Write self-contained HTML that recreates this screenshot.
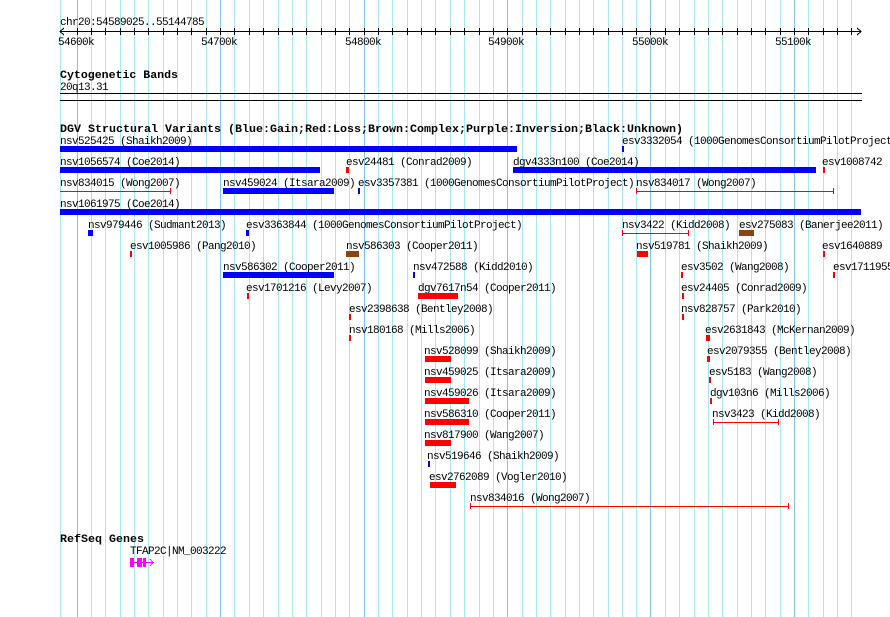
<!DOCTYPE html>
<html><head><meta charset="utf-8"><style>
html,body{margin:0;padding:0;background:#fff;}
svg{display:block;}
text{font-family:"Liberation Mono",monospace;font-size:11px;letter-spacing:-0.6px;fill:#000;}
.b{font-weight:bold;font-size:11px;letter-spacing:0;}
</style></head><body>
<svg width="890" height="617" xmlns="http://www.w3.org/2000/svg">
<g shape-rendering="crispEdges">
<line x1="60.5" y1="0" x2="60.5" y2="617" stroke="#a8e8f0"/>
<line x1="77.5" y1="0" x2="77.5" y2="617" stroke="#80c4ec"/>
<line x1="91.5" y1="0" x2="91.5" y2="617" stroke="#a8e8f0"/>
<line x1="105.5" y1="0" x2="105.5" y2="617" stroke="#a8e8f0"/>
<line x1="120.5" y1="0" x2="120.5" y2="617" stroke="#a8e8f0"/>
<line x1="134.5" y1="0" x2="134.5" y2="617" stroke="#a8e8f0"/>
<line x1="148.5" y1="0" x2="148.5" y2="617" stroke="#a8e8f0"/>
<line x1="163.5" y1="0" x2="163.5" y2="617" stroke="#a8e8f0"/>
<line x1="177.5" y1="0" x2="177.5" y2="617" stroke="#a8e8f0"/>
<line x1="191.5" y1="0" x2="191.5" y2="617" stroke="#a8e8f0"/>
<line x1="206.5" y1="0" x2="206.5" y2="617" stroke="#a8e8f0"/>
<line x1="220.5" y1="0" x2="220.5" y2="617" stroke="#80c4ec"/>
<line x1="234.5" y1="0" x2="234.5" y2="617" stroke="#a8e8f0"/>
<line x1="249.5" y1="0" x2="249.5" y2="617" stroke="#a8e8f0"/>
<line x1="263.5" y1="0" x2="263.5" y2="617" stroke="#a8e8f0"/>
<line x1="278.5" y1="0" x2="278.5" y2="617" stroke="#a8e8f0"/>
<line x1="292.5" y1="0" x2="292.5" y2="617" stroke="#a8e8f0"/>
<line x1="306.5" y1="0" x2="306.5" y2="617" stroke="#a8e8f0"/>
<line x1="321.5" y1="0" x2="321.5" y2="617" stroke="#a8e8f0"/>
<line x1="335.5" y1="0" x2="335.5" y2="617" stroke="#a8e8f0"/>
<line x1="349.5" y1="0" x2="349.5" y2="617" stroke="#a8e8f0"/>
<line x1="364.5" y1="0" x2="364.5" y2="617" stroke="#80c4ec"/>
<line x1="378.5" y1="0" x2="378.5" y2="617" stroke="#a8e8f0"/>
<line x1="392.5" y1="0" x2="392.5" y2="617" stroke="#a8e8f0"/>
<line x1="407.5" y1="0" x2="407.5" y2="617" stroke="#a8e8f0"/>
<line x1="421.5" y1="0" x2="421.5" y2="617" stroke="#a8e8f0"/>
<line x1="435.5" y1="0" x2="435.5" y2="617" stroke="#a8e8f0"/>
<line x1="450.5" y1="0" x2="450.5" y2="617" stroke="#a8e8f0"/>
<line x1="464.5" y1="0" x2="464.5" y2="617" stroke="#a8e8f0"/>
<line x1="479.5" y1="0" x2="479.5" y2="617" stroke="#a8e8f0"/>
<line x1="493.5" y1="0" x2="493.5" y2="617" stroke="#a8e8f0"/>
<line x1="507.5" y1="0" x2="507.5" y2="617" stroke="#80c4ec"/>
<line x1="522.5" y1="0" x2="522.5" y2="617" stroke="#a8e8f0"/>
<line x1="536.5" y1="0" x2="536.5" y2="617" stroke="#a8e8f0"/>
<line x1="550.5" y1="0" x2="550.5" y2="617" stroke="#a8e8f0"/>
<line x1="565.5" y1="0" x2="565.5" y2="617" stroke="#a8e8f0"/>
<line x1="579.5" y1="0" x2="579.5" y2="617" stroke="#a8e8f0"/>
<line x1="593.5" y1="0" x2="593.5" y2="617" stroke="#a8e8f0"/>
<line x1="608.5" y1="0" x2="608.5" y2="617" stroke="#a8e8f0"/>
<line x1="622.5" y1="0" x2="622.5" y2="617" stroke="#a8e8f0"/>
<line x1="636.5" y1="0" x2="636.5" y2="617" stroke="#a8e8f0"/>
<line x1="650.5" y1="0" x2="650.5" y2="617" stroke="#80c4ec"/>
<line x1="665.5" y1="0" x2="665.5" y2="617" stroke="#a8e8f0"/>
<line x1="679.5" y1="0" x2="679.5" y2="617" stroke="#a8e8f0"/>
<line x1="694.5" y1="0" x2="694.5" y2="617" stroke="#a8e8f0"/>
<line x1="708.5" y1="0" x2="708.5" y2="617" stroke="#a8e8f0"/>
<line x1="722.5" y1="0" x2="722.5" y2="617" stroke="#a8e8f0"/>
<line x1="737.5" y1="0" x2="737.5" y2="617" stroke="#a8e8f0"/>
<line x1="751.5" y1="0" x2="751.5" y2="617" stroke="#a8e8f0"/>
<line x1="765.5" y1="0" x2="765.5" y2="617" stroke="#a8e8f0"/>
<line x1="780.5" y1="0" x2="780.5" y2="617" stroke="#a8e8f0"/>
<line x1="794.5" y1="0" x2="794.5" y2="617" stroke="#80c4ec"/>
<line x1="808.5" y1="0" x2="808.5" y2="617" stroke="#a8e8f0"/>
<line x1="823.5" y1="0" x2="823.5" y2="617" stroke="#a8e8f0"/>
<line x1="837.5" y1="0" x2="837.5" y2="617" stroke="#a8e8f0"/>
<line x1="851.5" y1="0" x2="851.5" y2="617" stroke="#a8e8f0"/>
</g>

<text x="60" y="25">chr20:54589025..55144785</text>
<g stroke="#000" shape-rendering="crispEdges">
<line x1="60" y1="31.5" x2="861" y2="31.5"/>
<path d="M64 28 L60 31.5 L64 35 M857 28 L861 31.5 L857 35" fill="none"/>
<line x1="77.5" y1="28" x2="77.5" y2="35"/><line x1="91.5" y1="28" x2="91.5" y2="35"/><line x1="105.5" y1="28" x2="105.5" y2="35"/><line x1="120.5" y1="28" x2="120.5" y2="35"/><line x1="134.5" y1="28" x2="134.5" y2="35"/><line x1="148.5" y1="28" x2="148.5" y2="35"/><line x1="163.5" y1="28" x2="163.5" y2="35"/><line x1="177.5" y1="28" x2="177.5" y2="35"/><line x1="191.5" y1="28" x2="191.5" y2="35"/><line x1="206.5" y1="28" x2="206.5" y2="35"/>
<line x1="220.5" y1="28" x2="220.5" y2="35"/><line x1="234.5" y1="28" x2="234.5" y2="35"/><line x1="249.5" y1="28" x2="249.5" y2="35"/><line x1="263.5" y1="28" x2="263.5" y2="35"/><line x1="278.5" y1="28" x2="278.5" y2="35"/><line x1="292.5" y1="28" x2="292.5" y2="35"/><line x1="306.5" y1="28" x2="306.5" y2="35"/><line x1="321.5" y1="28" x2="321.5" y2="35"/><line x1="335.5" y1="28" x2="335.5" y2="35"/><line x1="349.5" y1="28" x2="349.5" y2="35"/>
<line x1="364.5" y1="28" x2="364.5" y2="35"/><line x1="378.5" y1="28" x2="378.5" y2="35"/><line x1="392.5" y1="28" x2="392.5" y2="35"/><line x1="407.5" y1="28" x2="407.5" y2="35"/><line x1="421.5" y1="28" x2="421.5" y2="35"/><line x1="435.5" y1="28" x2="435.5" y2="35"/><line x1="450.5" y1="28" x2="450.5" y2="35"/><line x1="464.5" y1="28" x2="464.5" y2="35"/><line x1="479.5" y1="28" x2="479.5" y2="35"/><line x1="493.5" y1="28" x2="493.5" y2="35"/>
<line x1="507.5" y1="28" x2="507.5" y2="35"/><line x1="522.5" y1="28" x2="522.5" y2="35"/><line x1="536.5" y1="28" x2="536.5" y2="35"/><line x1="550.5" y1="28" x2="550.5" y2="35"/><line x1="565.5" y1="28" x2="565.5" y2="35"/><line x1="579.5" y1="28" x2="579.5" y2="35"/><line x1="593.5" y1="28" x2="593.5" y2="35"/><line x1="608.5" y1="28" x2="608.5" y2="35"/><line x1="622.5" y1="28" x2="622.5" y2="35"/><line x1="636.5" y1="28" x2="636.5" y2="35"/>
<line x1="650.5" y1="28" x2="650.5" y2="35"/><line x1="665.5" y1="28" x2="665.5" y2="35"/><line x1="679.5" y1="28" x2="679.5" y2="35"/><line x1="694.5" y1="28" x2="694.5" y2="35"/><line x1="708.5" y1="28" x2="708.5" y2="35"/><line x1="722.5" y1="28" x2="722.5" y2="35"/><line x1="737.5" y1="28" x2="737.5" y2="35"/><line x1="751.5" y1="28" x2="751.5" y2="35"/><line x1="765.5" y1="28" x2="765.5" y2="35"/><line x1="780.5" y1="28" x2="780.5" y2="35"/>
<line x1="794.5" y1="28" x2="794.5" y2="35"/><line x1="808.5" y1="28" x2="808.5" y2="35"/><line x1="823.5" y1="28" x2="823.5" y2="35"/><line x1="837.5" y1="28" x2="837.5" y2="35"/><line x1="851.5" y1="28" x2="851.5" y2="35"/>
<line x1="60" y1="93.5" x2="862" y2="93.5"/>
<line x1="60" y1="100.5" x2="862" y2="100.5"/>
</g>
<text x="58" y="45">54600k</text>
<text x="201" y="45">54700k</text>
<text x="345" y="45">54800k</text>
<text x="488" y="45">54900k</text>
<text x="632" y="45">55000k</text>
<text x="775" y="45">55100k</text>

<text class="b" x="60" y="78" textLength="118" lengthAdjust="spacingAndGlyphs">Cytogenetic Bands</text>
<text x="60" y="90">20q13.31</text>

<text class="b" x="60" y="132" textLength="623" lengthAdjust="spacingAndGlyphs">DGV Structural Variants (Blue:Gain;Red:Loss;Brown:Complex;Purple:Inversion;Black:Unknown)</text>

<text x="60" y="144">nsv525425 (Shaikh2009)</text>
<text x="622" y="144">esv3332054 (1000GenomesConsortiumPilotProject</text>
<text x="60" y="165">nsv1056574 (Coe2014)</text>
<text x="346" y="165">esv24481 (Conrad2009)</text>
<text x="513" y="165">dgv4333n100 (Coe2014)</text>
<text x="822" y="165">esv1008742</text>
<text x="60" y="186">nsv834015 (Wong2007)</text>
<text x="223" y="186">nsv459024 (Itsara2009)</text>
<text x="358" y="186">esv3357381 (1000GenomesConsortiumPilotProject)</text>
<text x="636" y="186">nsv834017 (Wong2007)</text>
<text x="60" y="207">nsv1061975 (Coe2014)</text>
<text x="88" y="228">nsv979446 (Sudmant2013)</text>
<text x="246" y="228">esv3363844 (1000GenomesConsortiumPilotProject)</text>
<text x="622" y="228">nsv3422 (Kidd2008)</text>
<text x="739" y="228">esv275083 (Banerjee2011)</text>
<text x="130" y="249">esv1005986 (Pang2010)</text>
<text x="346" y="249">nsv586303 (Cooper2011)</text>
<text x="636" y="249">nsv519781 (Shaikh2009)</text>
<text x="822" y="249">esv1640889</text>
<text x="223" y="270">nsv586302 (Cooper2011)</text>
<text x="413" y="270">nsv472588 (Kidd2010)</text>
<text x="681" y="270">esv3502 (Wang2008)</text>
<text x="833" y="270">esv1711955</text>
<text x="246" y="291">esv1701216 (Levy2007)</text>
<text x="418" y="291">dgv7617n54 (Cooper2011)</text>
<text x="681" y="291">esv24405 (Conrad2009)</text>
<text x="349" y="312">esv2398638 (Bentley2008)</text>
<text x="681" y="312">nsv828757 (Park2010)</text>
<text x="349" y="333">nsv180168 (Mills2006)</text>
<text x="705" y="333">esv2631843 (McKernan2009)</text>
<text x="424" y="354">nsv528099 (Shaikh2009)</text>
<text x="707" y="354">esv2079355 (Bentley2008)</text>
<text x="424" y="375">nsv459025 (Itsara2009)</text>
<text x="709" y="375">esv5183 (Wang2008)</text>
<text x="424" y="396">nsv459026 (Itsara2009)</text>
<text x="710" y="396">dgv103n6 (Mills2006)</text>
<text x="424" y="417">nsv586310 (Cooper2011)</text>
<text x="712" y="417">nsv3423 (Kidd2008)</text>
<text x="424" y="438">nsv817900 (Wang2007)</text>
<text x="427" y="459">nsv519646 (Shaikh2009)</text>
<text x="429" y="480">esv2762089 (Vogler2010)</text>
<text x="470" y="501">nsv834016 (Wong2007)</text>

<g shape-rendering="crispEdges">
<rect x="60" y="146" width="457" height="6" fill="#0000ff"/>
<rect x="622" y="146" width="2" height="6" fill="#0000ff"/>
<rect x="60" y="167" width="260" height="6" fill="#0000ff"/>
<rect x="346" y="167" width="3" height="6" fill="#ff0000"/>
<rect x="513" y="167" width="303" height="6" fill="#0000ff"/>
<rect x="823" y="167" width="2" height="6" fill="#ff0000"/>
<rect x="223" y="188" width="111" height="6" fill="#0000ff"/>
<rect x="358" y="188" width="2" height="6" fill="#0000ff"/>
<rect x="60" y="209" width="801" height="6" fill="#0000ff"/>
<rect x="88" y="230" width="5" height="6" fill="#0000ff"/>
<rect x="246" y="230" width="3" height="6" fill="#0000ff"/>
<rect x="739" y="230" width="15" height="6" fill="#8b4513"/>
<rect x="130" y="251" width="2" height="6" fill="#ff0000"/>
<rect x="346" y="251" width="13" height="6" fill="#8b4513"/>
<rect x="637" y="251" width="11" height="6" fill="#ff0000"/>
<rect x="823" y="251" width="2" height="6" fill="#ff0000"/>
<rect x="223" y="272" width="111" height="6" fill="#0000ff"/>
<rect x="413" y="272" width="2" height="6" fill="#0000ff"/>
<rect x="681" y="272" width="2" height="6" fill="#ff0000"/>
<rect x="833" y="272" width="2" height="6" fill="#ff0000"/>
<rect x="247" y="293" width="2" height="6" fill="#ff0000"/>
<rect x="418" y="293" width="40" height="6" fill="#ff0000"/>
<rect x="682" y="293" width="2" height="6" fill="#ff0000"/>
<rect x="349" y="314" width="2" height="6" fill="#ff0000"/>
<rect x="682" y="314" width="2" height="6" fill="#ff0000"/>
<rect x="349" y="335" width="2" height="6" fill="#ff0000"/>
<rect x="706" y="335" width="4" height="6" fill="#ff0000"/>
<rect x="425" y="356" width="26" height="6" fill="#ff0000"/>
<rect x="707" y="356" width="3" height="6" fill="#ff0000"/>
<rect x="425" y="377" width="26" height="6" fill="#ff0000"/>
<rect x="709" y="377" width="2" height="6" fill="#ff0000"/>
<rect x="425" y="398" width="44" height="6" fill="#ff0000"/>
<rect x="710" y="398" width="2" height="6" fill="#ff0000"/>
<rect x="425" y="419" width="44" height="6" fill="#ff0000"/>
<rect x="425" y="440" width="26" height="6" fill="#ff0000"/>
<rect x="428" y="461" width="2" height="6" fill="#0000ff"/>
<rect x="430" y="482" width="26" height="6" fill="#ff0000"/>
</g>
<g stroke="#ff0000" fill="none" shape-rendering="crispEdges">
<path d="M60 191.5H170M170.5 188V194"/>
<path d="M636.5 188V194M636 191.5H833M833.5 188V194"/>
<path d="M622.5 230V236M622 233.5H688M688.5 230V236"/>
<path d="M713.5 419V425M713 422.5H778M778.5 419V425"/>
<path d="M470.5 503V509M470 506.5H788M788.5 503V509"/>
</g>

<text class="b" x="60" y="542" textLength="84" lengthAdjust="spacingAndGlyphs">RefSeq Genes</text>
<text x="130" y="554">TFAP2C|NM_003222</text>
<g fill="#ff00ff" shape-rendering="crispEdges">
<rect x="130" y="558" width="4" height="9"/>
<rect x="134" y="562" width="3" height="1"/>
<rect x="137" y="558" width="5" height="9"/>
<rect x="142" y="562" width="1" height="1"/>
<rect x="143" y="558" width="3" height="9"/>
<rect x="146" y="562" width="8" height="1"/>
<path d="M150 559L153 562.5L150 566" stroke="#ff00ff" fill="none"/>
</g>
</svg>
</body></html>
